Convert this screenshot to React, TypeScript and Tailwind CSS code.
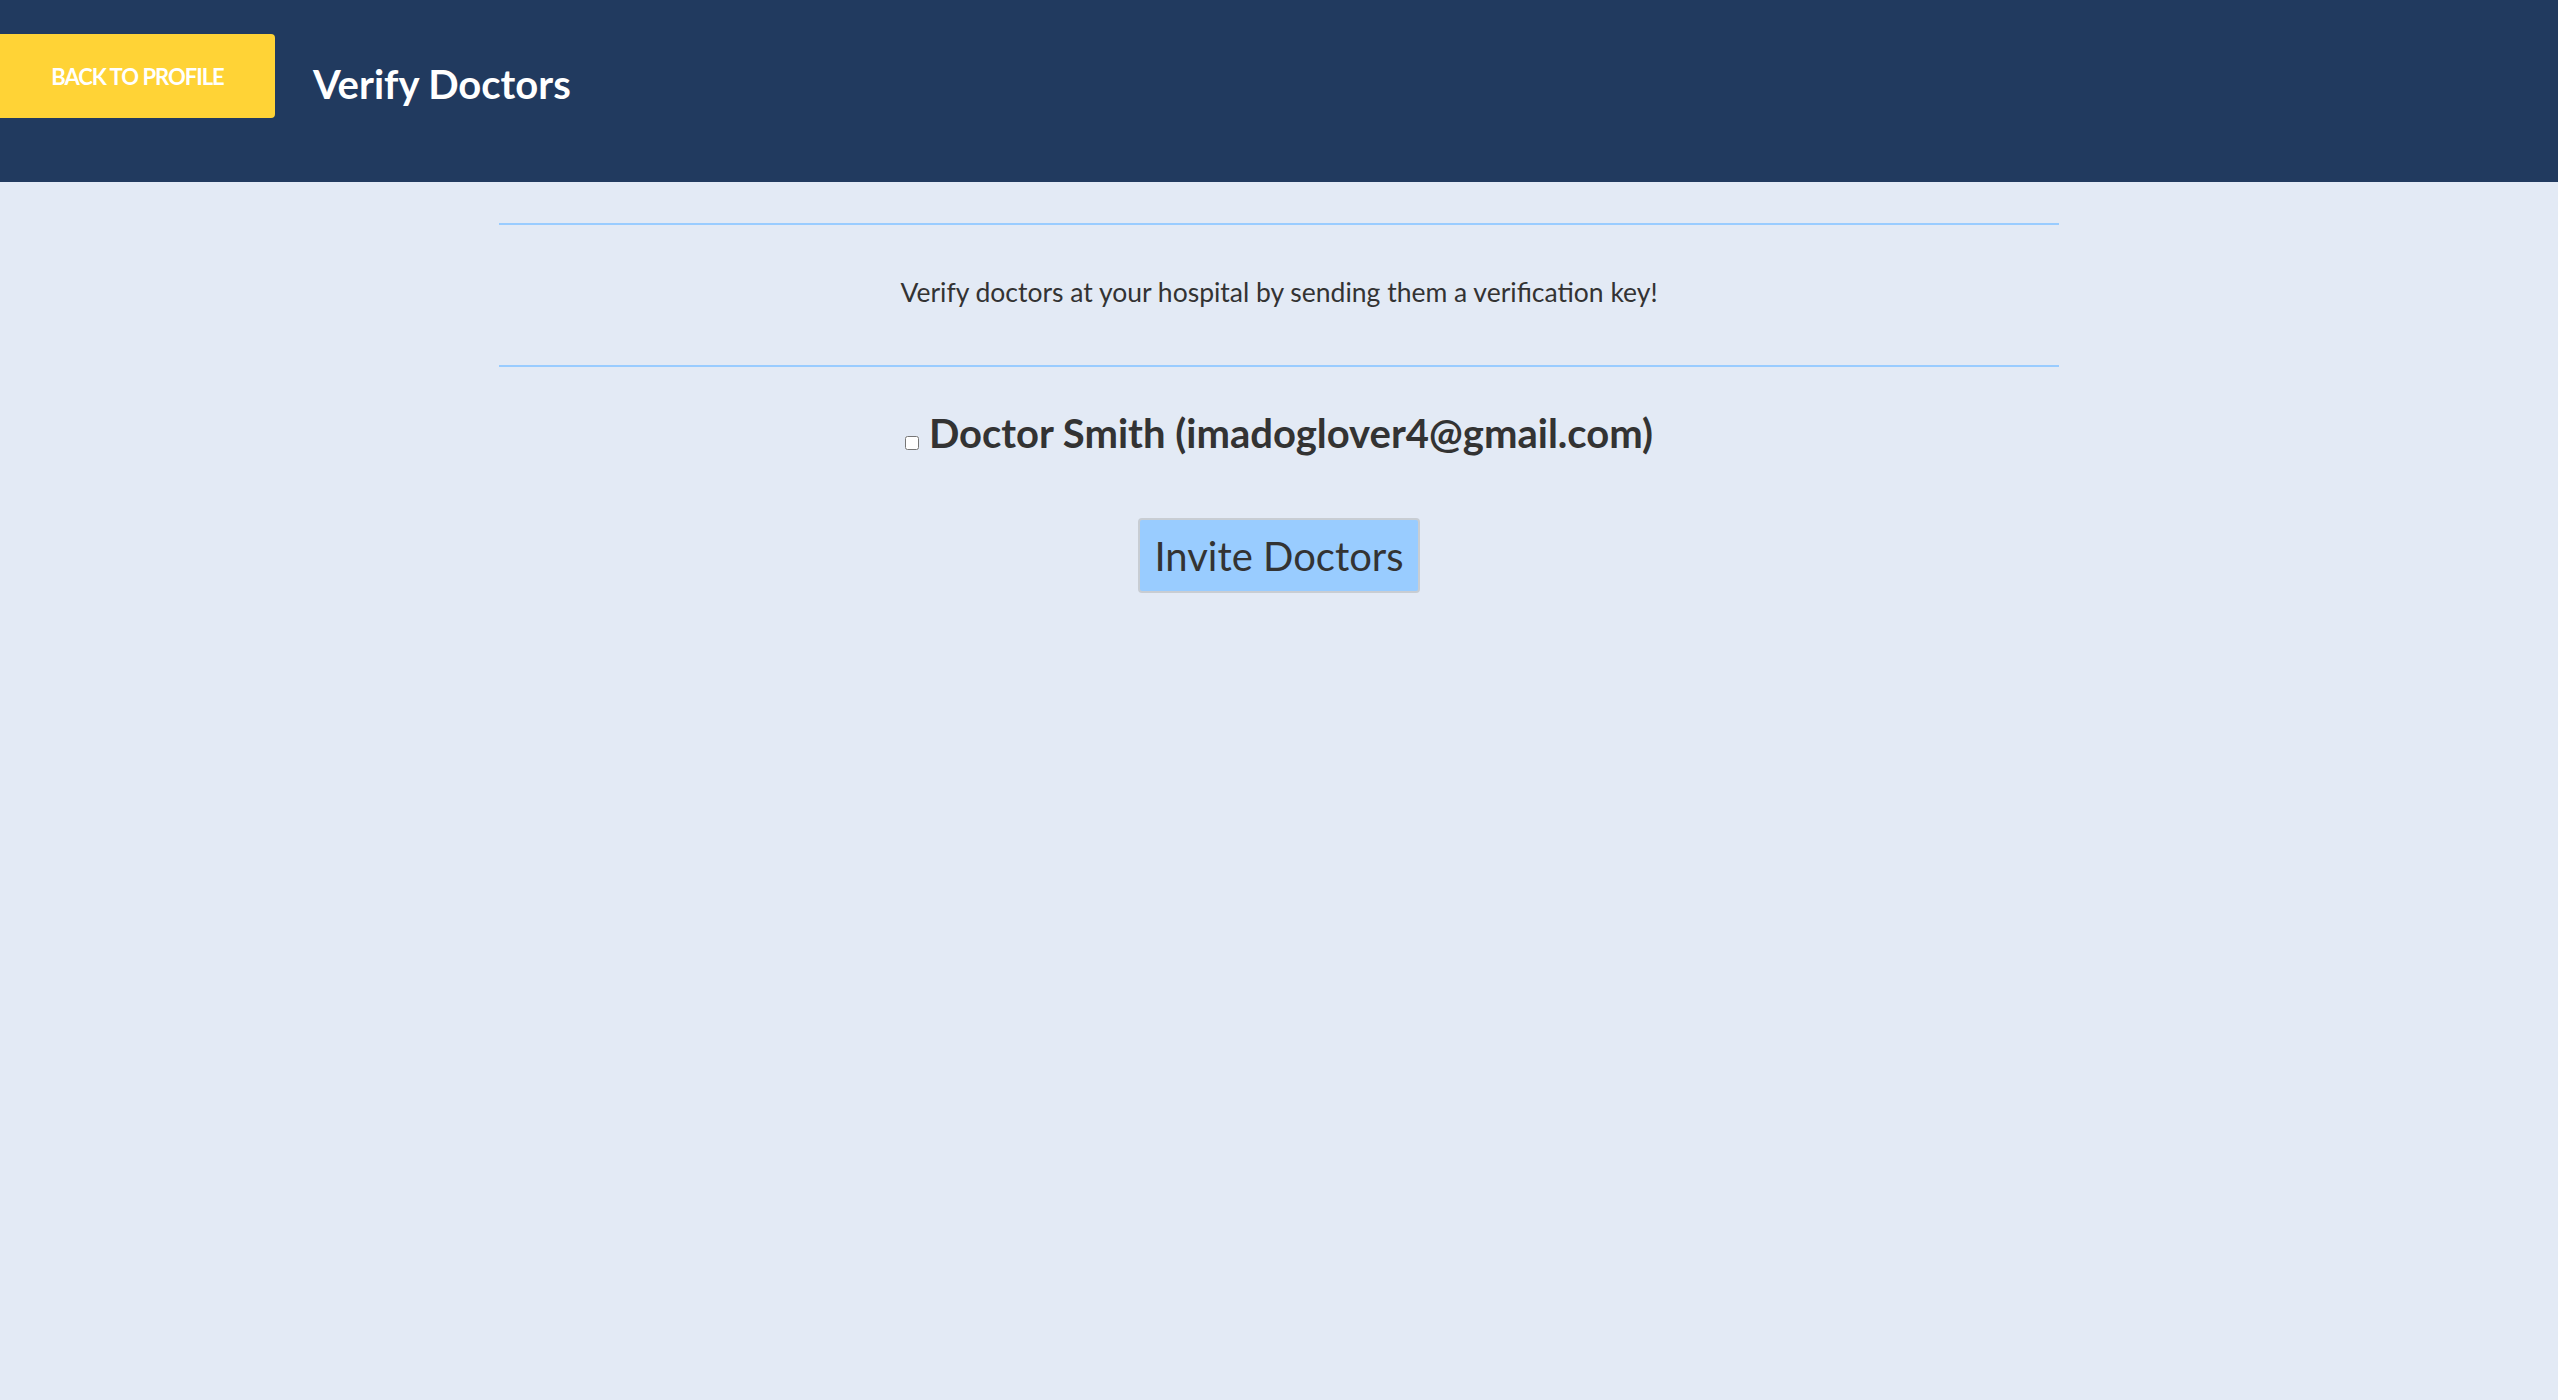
import React from "react";

export default function App() {
  return (
    <div className="min-h-[1400px] w-full bg-[#e3eaf5]" style={{ fontFamily: "Lato, 'Open Sans', sans-serif" }}>
      <header className="flex h-[182px] items-start bg-[#213a5f] pt-[34px]">
        <button className="flex h-[84px] w-[275px] items-center justify-center rounded-r-[4px] bg-[#ffd336] text-[22px] font-bold tracking-[-1px] text-white">
          BACK TO PROFILE
        </button>
        <h1 className="ml-[38px] mt-[26px] text-[40px] font-bold leading-[48px] text-white">Verify Doctors</h1>
      </header>
      <main className="mx-auto flex w-[1560px] flex-col items-center">
        <div className="mt-[41px] h-[2px] w-full bg-[#99ccff]" />
        <div className="flex h-[140px] items-center justify-center pb-[4px]">
          <p className="text-[26.5px] text-[#333]">Verify doctors at your hospital by sending them a verification key!</p>
        </div>
        <div className="h-[2px] w-full bg-[#99ccff]" />
        <label className="mt-[42px] flex items-end gap-[10px] text-[40px] font-bold leading-[1.2] text-[#333]">
          <input type="checkbox" className="mb-[7px] h-[14px] w-[14px]" />
          <span>Doctor Smith (imadoglover4@gmail.com)</span>
        </label>
        <button className="mt-[61px] h-[75px] w-[282px] rounded-[4px] border-2 border-[#c8cdd3] bg-[#99ccff] text-[40px] text-[#333]">
          Invite Doctors
        </button>
      </main>
    </div>
  );
}
